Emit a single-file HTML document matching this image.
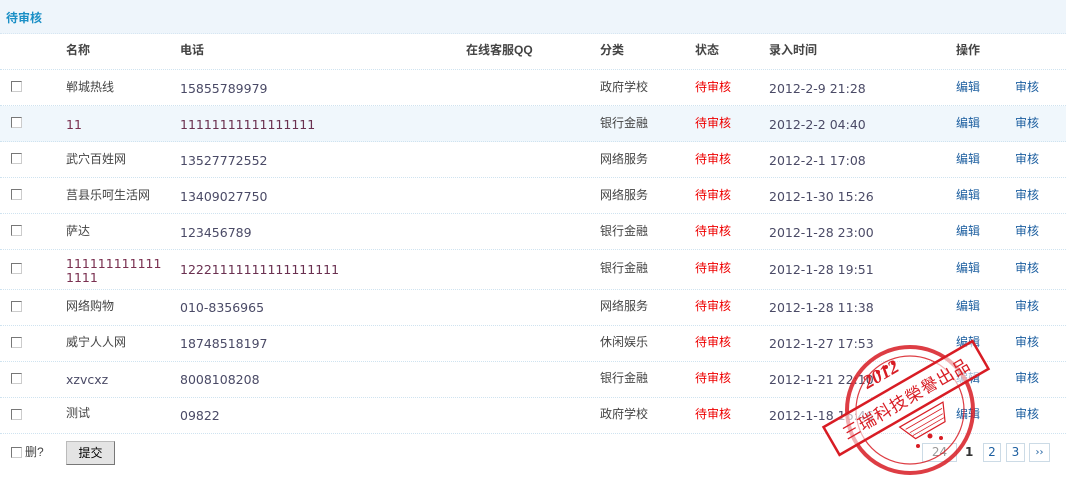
<!DOCTYPE html>
<html><head><meta charset="utf-8"><style>
*{margin:0;padding:0;box-sizing:border-box}
body{width:1066px;height:483px;background:#fff;position:relative;overflow:hidden;font-family:"Liberation Sans","Noto Sans CJK SC",sans-serif;font-size:12px;color:#444}
.top{position:absolute;left:0;top:0;width:1066px;height:34px;background:#eef5fb;border-bottom:1px dotted #d6e6f2}
.top span{position:absolute;left:6px;top:9px;color:#1a8fc6;font-weight:bold;font-size:12px}
.row{position:absolute;left:0;width:1066px;border-bottom:1px dotted #cfe3f0}
.row.alt{background:#f0f7fc}
.c{position:absolute;white-space:nowrap;line-height:13px}
.n{font-family:"DejaVu Sans",sans-serif;font-size:12.5px;color:#4a4a66}
.h{font-weight:bold;color:#444}
.cb{position:absolute;left:11px;width:11px;height:11px;border:1px solid #777;border-right-color:#ccc;border-bottom-color:#ccc;background:#fff}
.red{color:#e00}
.blue{color:#1d5fa0}
.pg{position:absolute;top:443px;height:19px;border:1px solid #ccdbe6;font-family:"DejaVu Sans",sans-serif;font-size:12px;color:#1d5fa0;text-align:center;line-height:17px}
</style></head><body>
<div class="top"><span>待审核</span></div>
<div class="row" style="top:34px;height:36px">
<div class="c h" style="left:66px;top:10px">名称</div>
<div class="c h" style="left:180px;top:10px">电话</div>
<div class="c h" style="left:466px;top:10px">在线客服QQ</div>
<div class="c h" style="left:600px;top:10px">分类</div>
<div class="c h" style="left:695px;top:10px">状态</div>
<div class="c h" style="left:769px;top:10px">录入时间</div>
<div class="c h" style="left:956px;top:10px">操作</div>
</div>

<div class="row" style="top:70px;height:36px"><div class="cb" style="top:11px"></div><div class="c" style="left:66px;top:11px">郸城热线</div><div class="c n" style="left:180px;top:12px">15855789979</div><div class="c" style="left:600px;top:11px">政府学校</div><div class="c red" style="left:695px;top:11px">待审核</div><div class="c n" style="left:769px;top:12px">2012-2-9 21:28</div><div class="c blue" style="left:956px;top:11px">编辑</div><div class="c blue" style="left:1015px;top:11px">审核</div></div>

<div class="row alt" style="top:106px;height:36px"><div class="cb" style="top:11px"></div><div class="c n" style="left:66px;top:12px;color:#7a3050">11</div><div class="c n" style="left:180px;top:12px;color:#6a3050">11111111111111111</div><div class="c" style="left:600px;top:11px">银行金融</div><div class="c red" style="left:695px;top:11px">待审核</div><div class="c n" style="left:769px;top:12px">2012-2-2 04:40</div><div class="c blue" style="left:956px;top:11px">编辑</div><div class="c blue" style="left:1015px;top:11px">审核</div></div>

<div class="row" style="top:142px;height:36px"><div class="cb" style="top:11px"></div><div class="c" style="left:66px;top:11px">武穴百姓网</div><div class="c n" style="left:180px;top:12px">13527772552</div><div class="c" style="left:600px;top:11px">网络服务</div><div class="c red" style="left:695px;top:11px">待审核</div><div class="c n" style="left:769px;top:12px">2012-2-1 17:08</div><div class="c blue" style="left:956px;top:11px">编辑</div><div class="c blue" style="left:1015px;top:11px">审核</div></div>

<div class="row" style="top:178px;height:36px"><div class="cb" style="top:11px"></div><div class="c" style="left:66px;top:11px">莒县乐呵生活网</div><div class="c n" style="left:180px;top:12px">13409027750</div><div class="c" style="left:600px;top:11px">网络服务</div><div class="c red" style="left:695px;top:11px">待审核</div><div class="c n" style="left:769px;top:12px">2012-1-30 15:26</div><div class="c blue" style="left:956px;top:11px">编辑</div><div class="c blue" style="left:1015px;top:11px">审核</div></div>

<div class="row" style="top:214px;height:36px"><div class="cb" style="top:11px"></div><div class="c" style="left:66px;top:11px">萨达</div><div class="c n" style="left:180px;top:12px">123456789</div><div class="c" style="left:600px;top:11px">银行金融</div><div class="c red" style="left:695px;top:11px">待审核</div><div class="c n" style="left:769px;top:12px">2012-1-28 23:00</div><div class="c blue" style="left:956px;top:11px">编辑</div><div class="c blue" style="left:1015px;top:11px">审核</div></div>

<div class="row" style="top:250px;height:40px"><div class="cb" style="top:13px"></div><div class="c n" style="left:66px;top:7px;color:#7a3050;white-space:normal;line-height:14px">111111111111<br>1111</div><div class="c n" style="left:180px;top:13px;color:#6a3050">12221111111111111111</div><div class="c" style="left:600px;top:12px">银行金融</div><div class="c red" style="left:695px;top:12px">待审核</div><div class="c n" style="left:769px;top:13px">2012-1-28 19:51</div><div class="c blue" style="left:956px;top:12px">编辑</div><div class="c blue" style="left:1015px;top:12px">审核</div></div>

<div class="row" style="top:290px;height:36px"><div class="cb" style="top:11px"></div><div class="c" style="left:66px;top:10px">网络购物</div><div class="c n" style="left:180px;top:11px">010-8356965</div><div class="c" style="left:600px;top:10px">网络服务</div><div class="c red" style="left:695px;top:10px">待审核</div><div class="c n" style="left:769px;top:11px">2012-1-28 11:38</div><div class="c blue" style="left:956px;top:10px">编辑</div><div class="c blue" style="left:1015px;top:10px">审核</div></div>

<div class="row" style="top:326px;height:36px"><div class="cb" style="top:11px"></div><div class="c" style="left:66px;top:10px">威宁人人网</div><div class="c n" style="left:180px;top:11px">18748518197</div><div class="c" style="left:600px;top:10px">休闲娱乐</div><div class="c red" style="left:695px;top:10px">待审核</div><div class="c n" style="left:769px;top:11px">2012-1-27 17:53</div><div class="c blue" style="left:956px;top:10px">编辑</div><div class="c blue" style="left:1015px;top:10px">审核</div></div>

<div class="row" style="top:362px;height:36px"><div class="cb" style="top:11px"></div><div class="c n" style="left:66px;top:11px">xzvcxz</div><div class="c n" style="left:180px;top:11px">8008108208</div><div class="c" style="left:600px;top:10px">银行金融</div><div class="c red" style="left:695px;top:10px">待审核</div><div class="c n" style="left:769px;top:11px">2012-1-21 22:10</div><div class="c blue" style="left:956px;top:10px">编辑</div><div class="c blue" style="left:1015px;top:10px">审核</div></div>

<div class="row" style="top:398px;height:36px"><div class="cb" style="top:11px"></div><div class="c" style="left:66px;top:9px">测试</div><div class="c n" style="left:180px;top:11px">09822</div><div class="c" style="left:600px;top:10px">政府学校</div><div class="c red" style="left:695px;top:10px">待审核</div><div class="c n" style="left:769px;top:11px">2012-1-18 16:46</div><div class="c blue" style="left:956px;top:10px">编辑</div><div class="c blue" style="left:1015px;top:10px">审核</div></div>

<div class="cb" style="top:447px"></div>
<div class="c" style="left:25px;top:446px">删?</div>
<div style="position:absolute;left:66px;top:441px;width:49px;height:24px;background:#e4e4e4;border:1px solid #bbb;border-right-color:#777;border-bottom-color:#777;text-align:center;line-height:22px;color:#000">提交</div>

<div class="pg" style="left:922px;width:35px;color:#999">24</div>
<div class="c" style="left:965px;top:446px;font-family:'DejaVu Sans',sans-serif;font-weight:bold;color:#333">1</div>
<div class="pg" style="left:983px;width:18px">2</div>
<div class="pg" style="left:1006px;width:19px">3</div>
<div class="pg" style="left:1029px;width:21px;font-size:10px">››</div>

<svg style="position:absolute;left:0;top:0" width="1066" height="483">
<g fill="none" stroke="#d81c24" opacity="0.85">
<circle cx="910" cy="410" r="63" stroke-width="4"/>
<circle cx="910" cy="410" r="54" stroke-width="1.2"/>
</g>
<g transform="translate(906,398) rotate(-30)">
<rect x="-86" y="-16" width="172" height="32" fill="#fff" fill-opacity="0.6" stroke="#d81c24" stroke-width="2.5"/>
<text x="0" y="7" text-anchor="middle" font-family="'Noto Sans CJK SC',sans-serif" font-size="17" fill="#d81c24" letter-spacing="1">三瑞科技榮譽出品</text>
<text x="-10" y="-27" text-anchor="middle" font-family="'Liberation Serif',serif" font-style="italic" font-weight="bold" font-size="19" fill="#d81c24">2012</text>
<path d="M-20 22 L30 22 L22 40 L-12 40 Z" fill="none" stroke="#d81c24" stroke-width="1.2"/>
<path d="M-16 27H26M-14 32H24M-13 36H23" stroke="#d81c24" stroke-width="0.8"/>
</g>
<g fill="#d81c24"><circle cx="878" cy="372" r="2"/><circle cx="886" cy="367" r="2"/><circle cx="893" cy="363" r="2"/><circle cx="930" cy="436" r="2.5"/><circle cx="918" cy="446" r="2"/><circle cx="941" cy="438" r="2"/></g>
</svg>
</body></html>
